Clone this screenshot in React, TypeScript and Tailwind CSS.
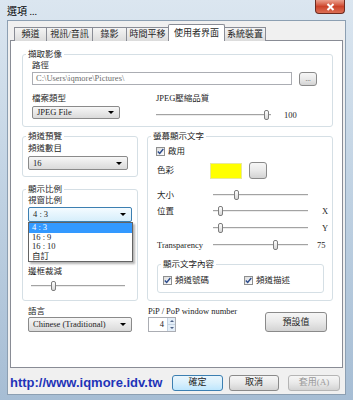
import React from "react";

const base = "font-['Liberation_Serif','Noto_Sans_CJK_TC',serif] text-[8.5px] text-[#1e1e1e]";

function Arrow() {
  return <span className="w-0 h-0 border-x-[3px] border-x-transparent border-t-[3px] border-t-black" />;
}

function Select({ text, className = "", focused = false }: { text: string; className?: string; focused?: boolean }) {
  return (
    <div
      className={`flex items-center justify-between rounded-[2px] border pl-[4px] pr-[5px] leading-none ${
        focused
          ? "border-[#3c7fb1] bg-gradient-to-b from-[#f4fbff] to-[#d6eefb]"
          : "border-[#8a8a8a] bg-gradient-to-b from-[#f7f7f7] to-[#dadada]"
      } ${className}`}
    >
      <span>{text}</span>
      <Arrow />
    </div>
  );
}

function Button({ className = "", children, focused = false, disabled = false }: { className?: string; children?: React.ReactNode; focused?: boolean; disabled?: boolean }) {
  return (
    <div
      className={`flex items-center justify-center rounded-[3px] border leading-none ${
        focused
          ? "border-[#3c7fb1] bg-gradient-to-b from-[#eaf6fd] via-[#d9f0fc] to-[#bee6fd]"
          : "border-[#8a8a8a] bg-gradient-to-b from-[#f6f6f6] via-[#e9e9e9] to-[#d3d3d3]"
      } ${disabled ? "text-[#9a9a9a] border-[#b5b5b5]" : ""} ${className}`}
    >
      {children}
    </div>
  );
}

function Slider({ className = "", pos }: { className?: string; pos: number }) {
  return (
    <div className={`relative h-[12px] ${className}`}>
      <div className="absolute left-0 right-0 top-[5px] h-[2px] border-t border-[#a3a3a3] bg-[#ececec]" />
      <div
        className="absolute top-[1px] h-[10px] w-[5px] rounded-[2px] border border-[#7d7d7d] bg-gradient-to-b from-white to-[#d6d6d6]"
        style={{ left: pos }}
      />
    </div>
  );
}

function Check({ checked = false }: { checked?: boolean }) {
  return (
    <span className="flex h-[9px] w-[9px] shrink-0 items-center justify-center border border-[#8e8f8f] bg-gradient-to-br from-[#dcdcdc] to-white">
      {checked && (
        <svg width="7" height="7" viewBox="0 0 7 7">
          <path d="M0.8 3.5 L2.7 5.5 L6.3 1" fill="none" stroke="#2b4b8c" strokeWidth="1.4" />
        </svg>
      )}
    </span>
  );
}

function Group({ title, className = "", children }: { title: string; className?: string; children: React.ReactNode }) {
  return (
    <fieldset className={`min-w-0 rounded-[3px] border border-[#d5dfe5] ${className}`}>
      <legend className="ml-[3px] px-[2px] leading-[12px]">{title}</legend>
      {children}
    </fieldset>
  );
}

const tabs = [
  { label: "頻道", w: "w-[33px]" },
  { label: "視訊/音訊", w: "w-[47px]" },
  { label: "錄影", w: "w-[35px]" },
  { label: "時間平移", w: "w-[43px]" },
  { label: "使用者界面", w: "w-[57px]", active: true },
  { label: "系統裝置", w: "w-[42px]" },
];

export default function App() {
  return (
    <div className={`flex h-[400px] w-[353px] flex-col overflow-hidden bg-gradient-to-b from-[#dbe6f0] via-[#bfd1e2] to-[#a6bdd4] ${base}`}>
      {/* title bar */}
      <div className="flex h-[20px] shrink-0 items-start justify-between pr-[8px]">
        <span className="ml-[7px] mt-[6px] text-[10px] leading-[12px] text-black">選項 ...</span>
        <div className="flex h-[14px] w-[30px] items-center justify-center rounded-b-[4px] border border-t-0 border-[#6d2a1f] bg-gradient-to-b from-[#eba08e] via-[#cc432a] to-[#dc6f55]">
          <svg width="9" height="8" viewBox="0 0 9 8">
            <path d="M1.5 1 L7.5 7 M7.5 1 L1.5 7" stroke="white" strokeWidth="2" />
          </svg>
        </div>
      </div>

      {/* body */}
      <div className="mx-[7px] mb-[5px] flex flex-1 flex-col border border-[#8c9fb2] bg-[#f0f0f0] px-[2px] pt-[3px]">
        <div className="relative z-10 -mb-px ml-[4px] flex h-[17px] items-end">
          {tabs.map((t, i) => (
            <div
              key={t.label}
              className={`flex items-center justify-center border border-b-0 border-[#898c95] text-[9px] leading-none ${t.w} ${
                i > 0 ? "-ml-px" : ""
              } ${t.active ? "relative h-[17px] rounded-t-[2px] bg-white" : "h-[14px] bg-gradient-to-b from-[#f4f4f4] to-[#dcdcdc]"}`}
            >
              {t.label}
            </div>
          ))}
        </div>

        {/* tab panel */}
        <div className="h-[328px] shrink-0 border border-[#898c95] bg-white pl-[11px] pr-[9px] pt-[7px]">
          <Group title="擷取影像" className="w-[311px]">
            <div className="pb-[5px] pl-[9px] pr-[15px]">
              <div className="leading-[10px]">路徑</div>
              <div className="mt-[2px] flex items-start gap-[7px]">
                <div className="h-[13px] w-[260px] border border-[#abadb3] bg-white pl-[3px] leading-[11px] text-[#6d6d6d]">
                  {"C:\\Users\\iqmore\\Pictures\\"}
                </div>
                <Button className="h-[14px] w-[18px] text-[7px] text-[#555]">...</Button>
              </div>
              <div className="mt-[2px] flex">
                <div className="w-[124px]">
                  <div className="mt-[5px] leading-[10px]">檔案類型</div>
                  <Select className="mt-[3px] h-[13px] w-[88px]" text="JPEG File" />
                </div>
                <div>
                  <div className="mt-[5px] leading-[10px]">JPEG壓縮品質</div>
                  <div className="mt-[6px] flex items-center">
                    <Slider className="w-[115px]" pos={108} />
                    <span className="ml-[13px] leading-none">100</span>
                  </div>
                </div>
              </div>
            </div>
          </Group>

          <div className="mt-[3px] grid grid-cols-[116px_186px] gap-x-[9px]">
            {/* left column */}
            <div className="flex flex-col">
              <Group title="頻道預覽">
                <div className="pb-[6px] pl-[5px]">
                  <div className="mt-[1px] leading-[10px]">頻道數目</div>
                  <Select className="mt-[3px] h-[14px] w-[100px]" text="16" />
                </div>
              </Group>
              <Group title="顯示比例" className="mt-[6px]">
                <div className="pb-[8px] pl-[5px]">
                  <div className="leading-[10px]">視窗比例</div>
                  <div className="relative mt-[2px] w-[104px]">
                    <Select focused className="h-[15px] w-[104px]" text="4 : 3" />
                    <div className="absolute left-0 top-full z-20 w-[105px] border border-[#646464] bg-white text-[8.5px] leading-[9.5px] shadow-[2px_2px_2px_rgba(0,0,0,0.3)]">
                      <div className="bg-[#3399ff] pl-[3px] text-white">4 : 3</div>
                      <div className="pl-[3px]">16 : 9</div>
                      <div className="pl-[3px]">16 : 10</div>
                      <div className="pl-[3px]">自訂</div>
                    </div>
                  </div>
                  <div className="mt-[44px] leading-[10px]">邊框裁減</div>
                  <Slider className="ml-[3px] mt-[4px] w-[94px]" pos={20} />
                </div>
              </Group>
              <div className="pl-[6px]">
                <div className="mt-[5px] leading-[10px]">語言</div>
                <Select className="mt-[1px] h-[15px] w-[104px]" text="Chinese (Traditional)" />
              </div>
            </div>

            {/* right column */}
            <div className="flex flex-col">
              <Group title="螢幕顯示文字">
                <div className="pb-[7px] pl-[8px]">
                  <div className="mt-[4px] flex h-[10px] items-center gap-[3px]">
                    <Check checked />
                    <span>啟用</span>
                  </div>
                  <div className="mt-[6px] flex h-[17px] items-center">
                    <span className="w-[54px] pl-px">色彩</span>
                    <div className="h-[16px] w-[32px] border border-[#e8e89a] bg-[#ffff00]" />
                    <Button className="ml-[7px] h-[17px] w-[18px]" />
                  </div>
                  <div className="mt-[10px] flex h-[12px] items-center">
                    <span className="w-[57px] pl-px">大小</span>
                    <Slider className="w-[95px]" pos={21} />
                  </div>
                  <div className="mt-[4px] flex h-[12px] items-center">
                    <span className="w-[57px] pl-px">位置</span>
                    <Slider className="w-[95px]" pos={5} />
                    <span className="ml-[14px]">X</span>
                  </div>
                  <div className="mt-[5px] flex h-[12px] items-center">
                    <span className="w-[57px]" />
                    <Slider className="w-[95px]" pos={5} />
                    <span className="ml-[14px]">Y</span>
                  </div>
                  <div className="mt-[5px] flex h-[12px] items-center">
                    <span className="w-[57px] pl-px">Transparency</span>
                    <Slider className="w-[95px]" pos={60} />
                    <span className="ml-[9px]">75</span>
                  </div>
                  <Group title="顯示文字內容" className="ml-px mt-[7px] w-[167px]">
                    <div className="flex pb-[7px] pl-[5px]">
                      <div className="mt-[5px] flex h-[10px] w-[81px] items-center gap-[3px]">
                        <Check checked />
                        <span>頻道號碼</span>
                      </div>
                      <div className="mt-[5px] flex h-[10px] items-center gap-[3px]">
                        <Check checked />
                        <span>頻道描述</span>
                      </div>
                    </div>
                  </Group>
                </div>
              </Group>
              <div className="flex items-end">
                <div className="pl-px">
                  <div className="mt-[5px] leading-[10px]">PiP / PoP window number</div>
                  <div className="mt-[1px] flex h-[15px] w-[28px] items-stretch border border-[#abadb3] bg-white">
                    <span className="flex flex-1 items-center justify-end pr-[3px] leading-none">4</span>
                    <div className="flex w-[8px] flex-col border-l border-[#c5d4e3] bg-[#e4eef8]">
                      <div className="flex flex-1 items-center justify-center border-b border-[#c5d4e3]">
                        <span className="h-0 w-0 border-x-[2px] border-b-[2px] border-x-transparent border-b-[#4d6185]" />
                      </div>
                      <div className="flex flex-1 items-center justify-center">
                        <span className="h-0 w-0 border-x-[2px] border-t-[2px] border-x-transparent border-t-[#4d6185]" />
                      </div>
                    </div>
                  </div>
                </div>
                <Button className="ml-auto mr-[6px] h-[20px] w-[62px] text-[9px]">預設值</Button>
              </div>
            </div>
          </div>
        </div>

        {/* footer */}
        <div className="flex flex-1 items-center pt-[3px] pr-[3px]">
          <span className="font-['Liberation_Sans',sans-serif] text-[13px] font-bold leading-none text-[#1f34b8]">
            http://www.iqmore.idv.tw
          </span>
          <div className="ml-auto flex items-center text-[9px]">
            <Button focused className="h-[16px] w-[51px]">確定</Button>
            <Button className="ml-[6px] h-[16px] w-[50px]">取消</Button>
            <Button disabled className="ml-[9px] h-[16px] w-[52px]">套用(A)</Button>
          </div>
        </div>
      </div>
    </div>
  );
}
